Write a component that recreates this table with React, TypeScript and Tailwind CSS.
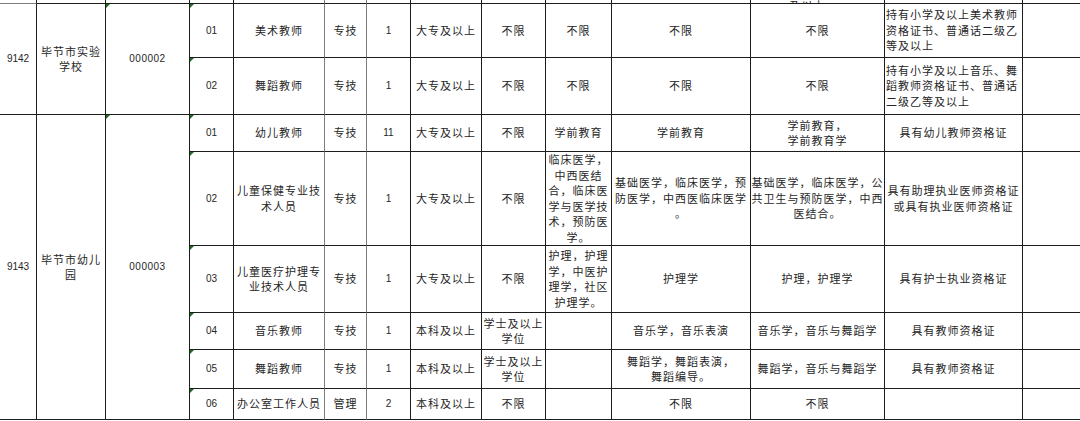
import React from "react";

type Row = {
  code: string;
  name: string[];
  type: string;
  n: string;
  edu: string;
  deg: string[];
  c9: string[];
  c10: string[];
  c11: string[];
  c12: string[];
  c12Left?: boolean;
};

const rows9142: Row[] = [
  {
    code: "01",
    name: ["美术教师"],
    type: "专技",
    n: "1",
    edu: "大专及以上",
    deg: ["不限"],
    c9: ["不限"],
    c10: ["不限"],
    c11: ["不限"],
    c12: ["持有小学及以上美术教师", "资格证书、普通话二级乙", "等及以上"],
    c12Left: true,
  },
  {
    code: "02",
    name: ["舞蹈教师"],
    type: "专技",
    n: "1",
    edu: "大专及以上",
    deg: ["不限"],
    c9: ["不限"],
    c10: ["不限"],
    c11: ["不限"],
    c12: ["持有小学及以上音乐、舞", "蹈教师资格证书、普通话", "二级乙等及以上"],
    c12Left: true,
  },
];

const rows9143: Row[] = [
  {
    code: "01",
    name: ["幼儿教师"],
    type: "专技",
    n: "11",
    edu: "大专及以上",
    deg: ["不限"],
    c9: ["学前教育"],
    c10: ["学前教育"],
    c11: ["学前教育，", "学前教育学"],
    c12: ["具有幼儿教师资格证"],
  },
  {
    code: "02",
    name: ["儿童保健专业技", "术人员"],
    type: "专技",
    n: "1",
    edu: "大专及以上",
    deg: ["不限"],
    c9: ["临床医学，", "中西医结", "合，临床医", "学与医学技", "术，预防医", "学。"],
    c10: ["基础医学，临床医学，预", "防医学，中西医临床医学", "。"],
    c11: ["基础医学，临床医学，公", "共卫生与预防医学，中西", "医结合。"],
    c12: ["具有助理执业医师资格证", "或具有执业医师资格证"],
  },
  {
    code: "03",
    name: ["儿童医疗护理专", "业技术人员"],
    type: "专技",
    n: "1",
    edu: "大专及以上",
    deg: ["不限"],
    c9: ["护理，护理", "学，中医护", "理学，社区", "护理学。"],
    c10: ["护理学"],
    c11: ["护理，护理学"],
    c12: ["具有护士执业资格证"],
  },
  {
    code: "04",
    name: ["音乐教师"],
    type: "专技",
    n: "1",
    edu: "本科及以上",
    deg: ["学士及以上", "学位"],
    c9: [],
    c10: ["音乐学，音乐表演"],
    c11: ["音乐学，音乐与舞蹈学"],
    c12: ["具有教师资格证"],
  },
  {
    code: "05",
    name: ["舞蹈教师"],
    type: "专技",
    n: "1",
    edu: "本科及以上",
    deg: ["学士及以上", "学位"],
    c9: [],
    c10: ["舞蹈学，舞蹈表演，", "舞蹈编导。"],
    c11: ["舞蹈学，音乐与舞蹈学"],
    c12: ["具有教师资格证"],
  },
  {
    code: "06",
    name: ["办公室工作人员"],
    type: "管理",
    n: "2",
    edu: "本科及以上",
    deg: ["不限"],
    c9: [],
    c10: ["不限"],
    c11: ["不限"],
    c12: [],
  },
];

const CJK = "font-['Noto_Sans_CJK_SC',sans-serif] text-[11px] tracking-[1px] leading-[15.5px]";
const NUM = "font-['Liberation_Sans',sans-serif] text-[10px] leading-[12px]";

function Tri() {
  return (
    <span className="absolute left-[-1px] top-0 h-0 w-0 border-t-[5px] border-r-[5px] border-t-[#1f6e1f] border-r-transparent" />
  );
}

function Cell({
  children,
  className = "",
  gray = false,
  last = false,
  tri = false,
  left = false,
}: {
  children?: React.ReactNode;
  className?: string;
  gray?: boolean;
  last?: boolean;
  tri?: boolean;
  left?: boolean;
}) {
  return (
    <div
      className={`relative flex items-center overflow-hidden border-b border-b-[#1c1c1c] ${
        last ? "" : gray ? "border-r border-r-[#7d7d7d]" : "border-r border-r-[#1c1c1c]"
      } ${left ? "justify-start pl-[1px] text-left" : "justify-center text-center"} text-[#262626] ${className}`}
    >
      {tri && <Tri />}
      {children}
    </div>
  );
}

function Lines({ lines }: { lines: string[] }) {
  return (
    <div className={CJK}>
      {lines.map((l, i) => (
        <div key={i} className="whitespace-nowrap">
          {l}
        </div>
      ))}
    </div>
  );
}

function JobCells({ r }: { r: Row }) {
  return (
    <>
      <Cell tri>
        <span className={NUM}>{r.code}</span>
      </Cell>
      <Cell gray>
        <Lines lines={r.name} />
      </Cell>
      <Cell gray>
        <Lines lines={[r.type]} />
      </Cell>
      <Cell>
        <span className={NUM}>{r.n}</span>
      </Cell>
      <Cell>
        <Lines lines={[r.edu]} />
      </Cell>
      <Cell>
        <Lines lines={r.deg} />
      </Cell>
      <Cell>
        <Lines lines={r.c9} />
      </Cell>
      <Cell>
        <Lines lines={r.c10} />
      </Cell>
      <Cell>
        <Lines lines={r.c11} />
      </Cell>
      <Cell left={r.c12Left}>
        <Lines lines={r.c12} />
      </Cell>
      <Cell last />
    </>
  );
}

export default function App() {
  return (
    <div className="h-[421px] w-[1080px] overflow-hidden bg-white">
      <div className="grid grid-cols-[37px_69px_84px_44px_91px_42px_44px_71px_64px_66px_139px_134px_138px_57px] grid-rows-[4px_54px_57px_37px_94px_67px_37px_39px_31px]">
        {/* partial top row */}
        <div className="border-r border-b border-r-[#1c1c1c] border-b-[#7d7d7d]" />
        <div className="border-r border-b border-[#1c1c1c]" />
        <div className="border-r border-b border-[#1c1c1c]" />
        <div className="border-r border-b border-[#1c1c1c]" />
        <div className="border-r border-b border-r-[#7d7d7d] border-b-[#1c1c1c]" />
        <div className="border-r border-b border-r-[#7d7d7d] border-b-[#1c1c1c]" />
        <div className="border-r border-b border-[#1c1c1c]" />
        <div className="border-r border-b border-[#1c1c1c]" />
        <div className="border-r border-b border-[#1c1c1c]" />
        <div className="border-r border-b border-[#1c1c1c]" />
        <div className="border-r border-b border-[#1c1c1c]" />
        <div className="flex items-end justify-center overflow-hidden border-r border-b border-[#1c1c1c] pr-[20px]">
          <span className={`${CJK} mb-[-10px] text-[#262626]`}>及以上</span>
        </div>
        <div className="border-r border-b border-[#1c1c1c]" />
        <div className="border-b border-[#1c1c1c]" />

        {/* 9142 group */}
        <Cell className="row-span-2">
          <span className={NUM}>9142</span>
        </Cell>
        <Cell className="row-span-2">
          <Lines lines={["毕节市实验", "学校"]} />
        </Cell>
        <Cell className="row-span-2" tri>
          <span className={`${NUM} tracking-[0.5px]`}>000002</span>
        </Cell>
        <JobCells r={rows9142[0]} />
        <JobCells r={rows9142[1]} />

        {/* 9143 group */}
        <Cell className="row-span-6">
          <span className={NUM}>9143</span>
        </Cell>
        <Cell className="row-span-6">
          <Lines lines={["毕节市幼儿", "园"]} />
        </Cell>
        <Cell className="row-span-6" tri>
          <span className={`${NUM} tracking-[0.5px]`}>000003</span>
        </Cell>
        {rows9143.map((r, i) => (
          <JobCells key={i} r={r} />
        ))}
      </div>
    </div>
  );
}
